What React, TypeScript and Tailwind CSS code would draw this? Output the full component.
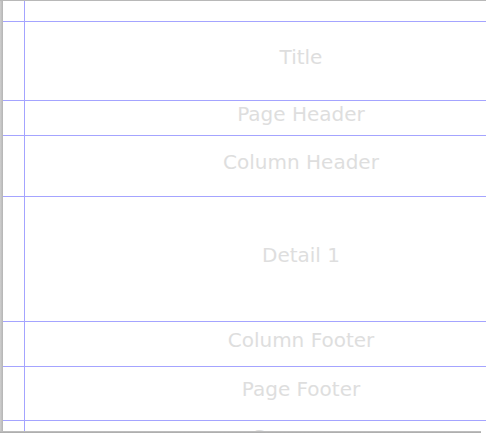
import React from "react"

interface Band {
  name: string
  height: number
}

const bands: Band[] = [
  { name: "", height: 20 },
  { name: "Title", height: 78 },
  { name: "Page Header", height: 34 },
  { name: "Column Header", height: 60 },
  { name: "Detail 1", height: 124 },
  { name: "Column Footer", height: 44 },
  { name: "Page Footer", height: 53 },
  { name: "Summary", height: 40 },
]

function BandRow({ band, last }: { band: Band; last: boolean }) {
  return (
    <div
      className={`flex shrink-0 ${last ? "" : "border-b border-[#a4a4ff]"}`}
      style={{ height: band.height + (last ? 0 : 1) }}
    >
      <div className="w-[22px] shrink-0 border-r border-[#a4a4ff]" />
      <div className="flex flex-1 items-center justify-center pb-[9px] text-[20px] leading-none text-[#dedede]">
        {band.name}
      </div>
    </div>
  )
}

export default function App() {
  return (
    <div
      className="relative flex h-[433px] w-[486px] flex-col overflow-hidden bg-white"
      style={{ fontFamily: '"DejaVu Sans", sans-serif' }}
    >
      <div className="h-px w-full shrink-0 bg-[#b8b8b8]" />
      <div className="flex min-h-0 flex-1">
        <div className="w-[3px] shrink-0 bg-gradient-to-r from-[#cfcfcf] to-[#b4b4b4]" />
        <div className="flex w-[574px] shrink-0 flex-col overflow-hidden">
          {bands.map((b, i) => (
            <BandRow key={i} band={b} last={i === bands.length - 1} />
          ))}
        </div>
      </div>
      <div className="absolute bottom-0 left-0 h-[2px] w-[481px] bg-gradient-to-b from-[#c4c4c4] to-[#a8a8a8]" />
    </div>
  )
}
